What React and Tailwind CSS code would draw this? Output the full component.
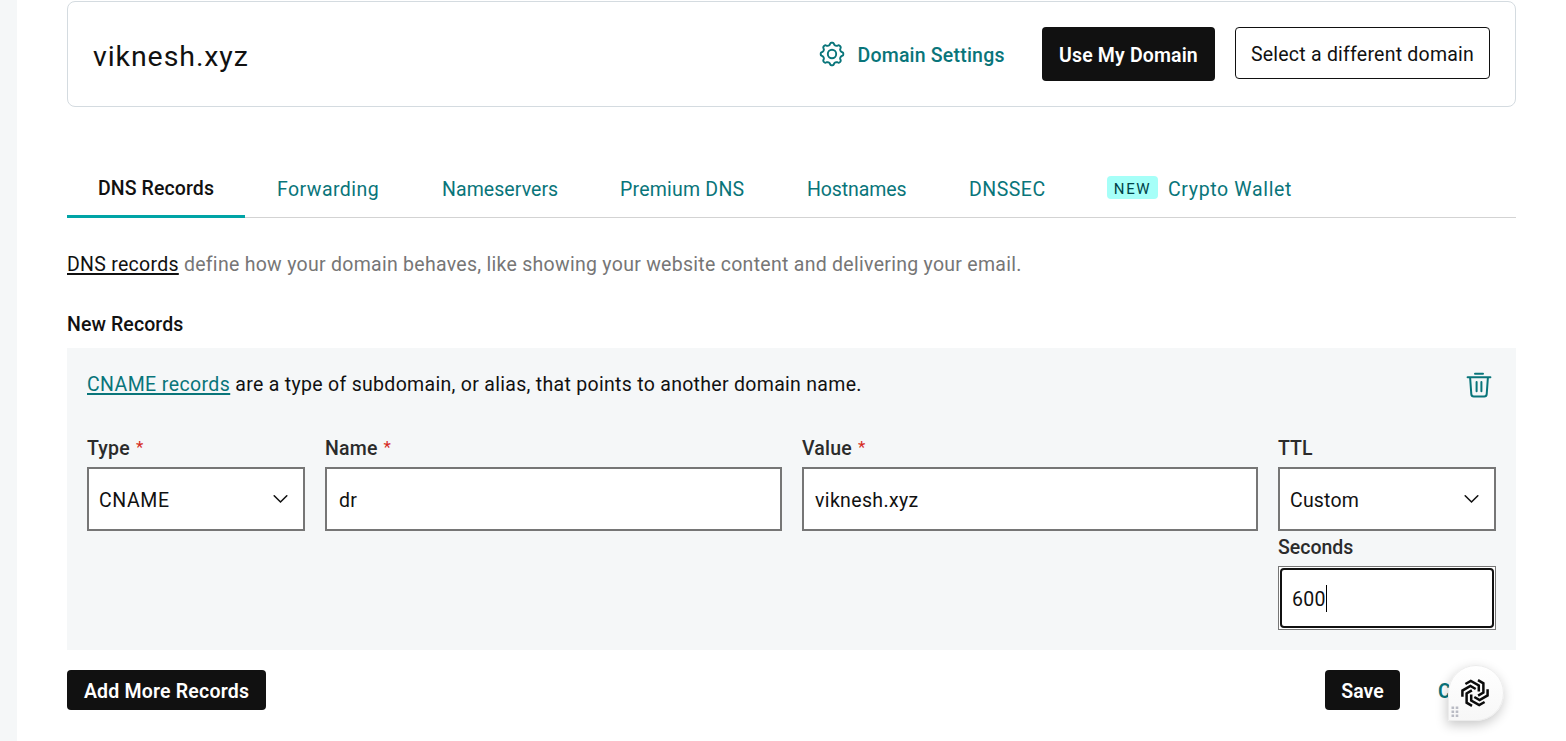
import React from "react";

const GEAR_PATH =
  "M" +
  Array.from({ length: 160 }, (_, i) => {
    const a = (i / 160) * Math.PI * 2;
    const r = 10.2 + 1.15 * Math.tanh(1.8 * Math.cos(8 * a));
    return `${(13 + r * Math.cos(a)).toFixed(2)} ${(13 + r * Math.sin(a)).toFixed(2)}`;
  }).join("L") +
  "Z";

function GearIcon() {
  return (
    <svg width="26" height="26" viewBox="0 0 26 26" fill="none" stroke="#09757a" strokeWidth="1.9" strokeLinejoin="round">
      <path d={GEAR_PATH} />
      <circle cx="13" cy="13" r="4.2" />
    </svg>
  );
}

function TrashIcon() {
  return (
    <svg width="26" height="28" viewBox="0 0 26 28" fill="none" stroke="#09757a" strokeWidth="2" strokeLinecap="round" strokeLinejoin="round">
      <path d="M9 1.8H17M1.6 5.3H24.4M4.1 5.5L5.3 22.1Q5.5 24.4 7.7 24.4H18.3Q20.5 24.4 20.7 22.1L21.9 5.5M10.6 10V19.2M15.4 10V19.2" />
    </svg>
  );
}

function Chevron() {
  return (
    <svg width="16" height="10" viewBox="0 0 16 10" fill="none" stroke="#111" strokeWidth="1.6" strokeLinecap="round">
      <path d="M2.2 1.8L8.5 8L14.8 1.8" />
    </svg>
  );
}

function SwirlLogo() {
  return (
    <svg width="30" height="30" viewBox="-15 -15 30 30" fill="none" stroke="#0b0b0b" strokeWidth="2.5">
      {[0, 60, 120, 180, 240, 300].map((angle) => (
        <path key={angle} transform={`rotate(${angle})`} d="M-9.6 -9L-4.2 -12.1L3.8 -7.5V-1.4" />
      ))}
    </svg>
  );
}

const TABS = [
  { label: "Forwarding", box: "w-[165px]", text: "tracking-[0.45px]" },
  { label: "Nameservers", box: "w-[178px]", text: "tracking-[0.07px]" },
  { label: "Premium DNS", box: "w-[187px]", text: "tracking-[0.22px]" },
  { label: "Hostnames", box: "w-[162px]", text: "tracking-[-0.1px]" },
  { label: "DNSSEC", box: "w-[138px]", text: "tracking-[0.5px]" },
];

function Label({ children, required, tracking }) {
  return (
    <div className="flex h-[31px] items-start pt-px leading-6 font-medium text-[#2b2b2b]">
      <span className={tracking}>{children}</span>
      {required && <span className="-mt-[2px] ml-[6px] text-[17px] font-normal text-[#d62b1f]">*</span>}
    </div>
  );
}

function Field({ children, pad }) {
  return (
    <div className={`flex h-[64px] items-center justify-between border-2 border-[#767676] bg-white pt-[4px] text-[#111] ${pad}`}>
      {children}
    </div>
  );
}

export default function App() {
  return (
    <div className="flex h-[741px] w-[1566px] overflow-hidden bg-white font-['Roboto',sans-serif] text-[19.5px] whitespace-nowrap text-[#111]">
      <div className="w-[17px] shrink-0 bg-[#f5f7f8]" />
      <main className="ml-[50px] w-[1449px] shrink-0 pt-px">
        <section className="flex h-[106px] items-start rounded-lg border border-[#d4dbe0] pl-[25px]">
          <h1 className="mt-[37px] w-[726px] text-[28.5px] leading-9 tracking-[0.92px]">viknesh.xyz</h1>
          <div className="mt-[39px] flex w-[223px] items-start text-[#09757a]">
            <GearIcon />
            <span className="mt-[3px] ml-[12.5px] leading-6 font-medium tracking-[0.2px]">Domain Settings</span>
          </div>
          <button className="mt-[25px] flex h-[54px] w-[173px] items-center justify-center rounded bg-[#111] pt-[3px] font-semibold tracking-[0.15px] text-white">Use My Domain</button>
          <button className="mt-[25px] ml-5 flex h-[52px] w-[255px] items-center justify-center rounded border border-[#111] pt-[4px] tracking-[0.23px]">Select a different domain</button>
        </section>

        <nav className="mt-[53px] flex h-[58px] items-start border-b border-[#d3d3d3] leading-6 text-[#09757a]">
          <div className="h-[58px] w-[178px] rounded-t-xs border-b-3 border-[#00a4a6] pt-[17px] pl-[31px] font-medium tracking-[0.1px] text-[#111]">DNS Records</div>
          {TABS.map((tab) => (
            <div key={tab.label} className={`pt-[18px] pl-8 ${tab.box} ${tab.text}`}>{tab.label}</div>
          ))}
          <div className="flex pl-8">
            <span className="mt-[16px] flex h-[23px] w-[51px] items-center justify-center rounded bg-[#a6fff8] pt-[2px] text-[15px] tracking-[1.6px] text-[#004249]">NEW</span>
            <span className="mt-[18px] ml-[10px] tracking-[0.65px]">Crypto Wallet</span>
          </div>
        </nav>

        <p className="mt-[35px] leading-6 tracking-[0.28px] text-[#767676]">
          <span className="text-[#111] underline decoration-2 underline-offset-2">DNS records</span> define how your domain behaves, like showing your website content and delivering your email.
        </p>
        <h2 className="mt-[36px] leading-6 font-medium tracking-[0.1px]">New Records</h2>

        <section className="mt-[11px] h-[302px] bg-[#f5f7f8] px-5 pt-[25px]">
          <div className="flex h-[63px] items-start justify-between leading-6 text-[#111]">
            <p className="tracking-[0.3px]">
              <span className="tracking-[0.4px] text-[#09757a] underline decoration-2 underline-offset-2">CNAME records</span> are a type of subdomain, or alias, that points to another domain name.
            </p>
            <span className="-mt-px mr-1"><TrashIcon /></span>
          </div>
          <div className="grid grid-cols-[218px_457px_456px_218px] gap-x-5">
            <div>
              <Label required tracking="tracking-[0.2px]">Type</Label>
              <Field pad="pl-[10px] pr-[15px]"><span className="tracking-[0.6px]">CNAME</span><span className="mb-1"><Chevron /></span></Field>
            </div>
            <div>
              <Label required tracking="tracking-[0.2px]">Name</Label>
              <Field pad="pl-[12px]"><span className="tracking-[0.3px]">dr</span></Field>
            </div>
            <div>
              <Label required tracking="tracking-[0.2px]">Value</Label>
              <Field pad="pl-[11px]"><span className="tracking-[0.35px]">viknesh.xyz</span></Field>
            </div>
            <div>
              <Label>TTL</Label>
              <Field pad="pl-[10px] pr-[15px]"><span className="tracking-[0.2px]">Custom</span><span className="mb-1"><Chevron /></span></Field>
              <div className="pt-[4px]">
                <Label>Seconds</Label>
              </div>
              <div className="h-[64px] border border-[#767676] bg-white p-px">
                <div className="flex h-full items-center rounded border-2 border-[#111] pl-[10px]">
                  <span className="pt-[4px] tracking-[0.3px]">600</span>
                  <span className="h-[27px] w-px bg-black" />
                </div>
              </div>
            </div>
          </div>
        </section>

        <div className="mt-5 flex items-start font-semibold">
          <button className="flex h-10 w-[199px] items-center justify-center rounded bg-[#111] pt-[3px] tracking-[0.2px] text-white">Add More Records</button>
          <button className="ml-[1059px] flex h-10 w-[75px] items-center justify-center rounded bg-[#111] pt-[3px] text-white">Save</button>
          <div className="relative ml-[37px] h-10 w-[70px] pt-[7px] pl-px text-[#09757a]">
            <span className="block w-[12px] overflow-hidden">C</span>
            <div className="absolute top-[-5px] left-[11px] flex h-[56px] w-[56px] items-center justify-center rounded-full rounded-bl-none border border-[#ececec] bg-linear-to-b from-white to-[#f7f7f7] pr-[2px] shadow-[-1px_4px_12px_rgba(0,0,0,0.22)]">
              <SwirlLogo />
              <svg className="absolute bottom-[2px] left-[2px]" width="8" height="12" viewBox="0 0 8 12" fill="#b9bbc4">
                {[0, 4, 8].map((y) => (
                  <path key={y} d={`M0.5 ${y + 0.5}h2.6v2.6h-2.6zM4.7 ${y + 0.5}h2.6v2.6h-2.6z`} />
                ))}
              </svg>
            </div>
          </div>
        </div>
      </main>
    </div>
  );
}
